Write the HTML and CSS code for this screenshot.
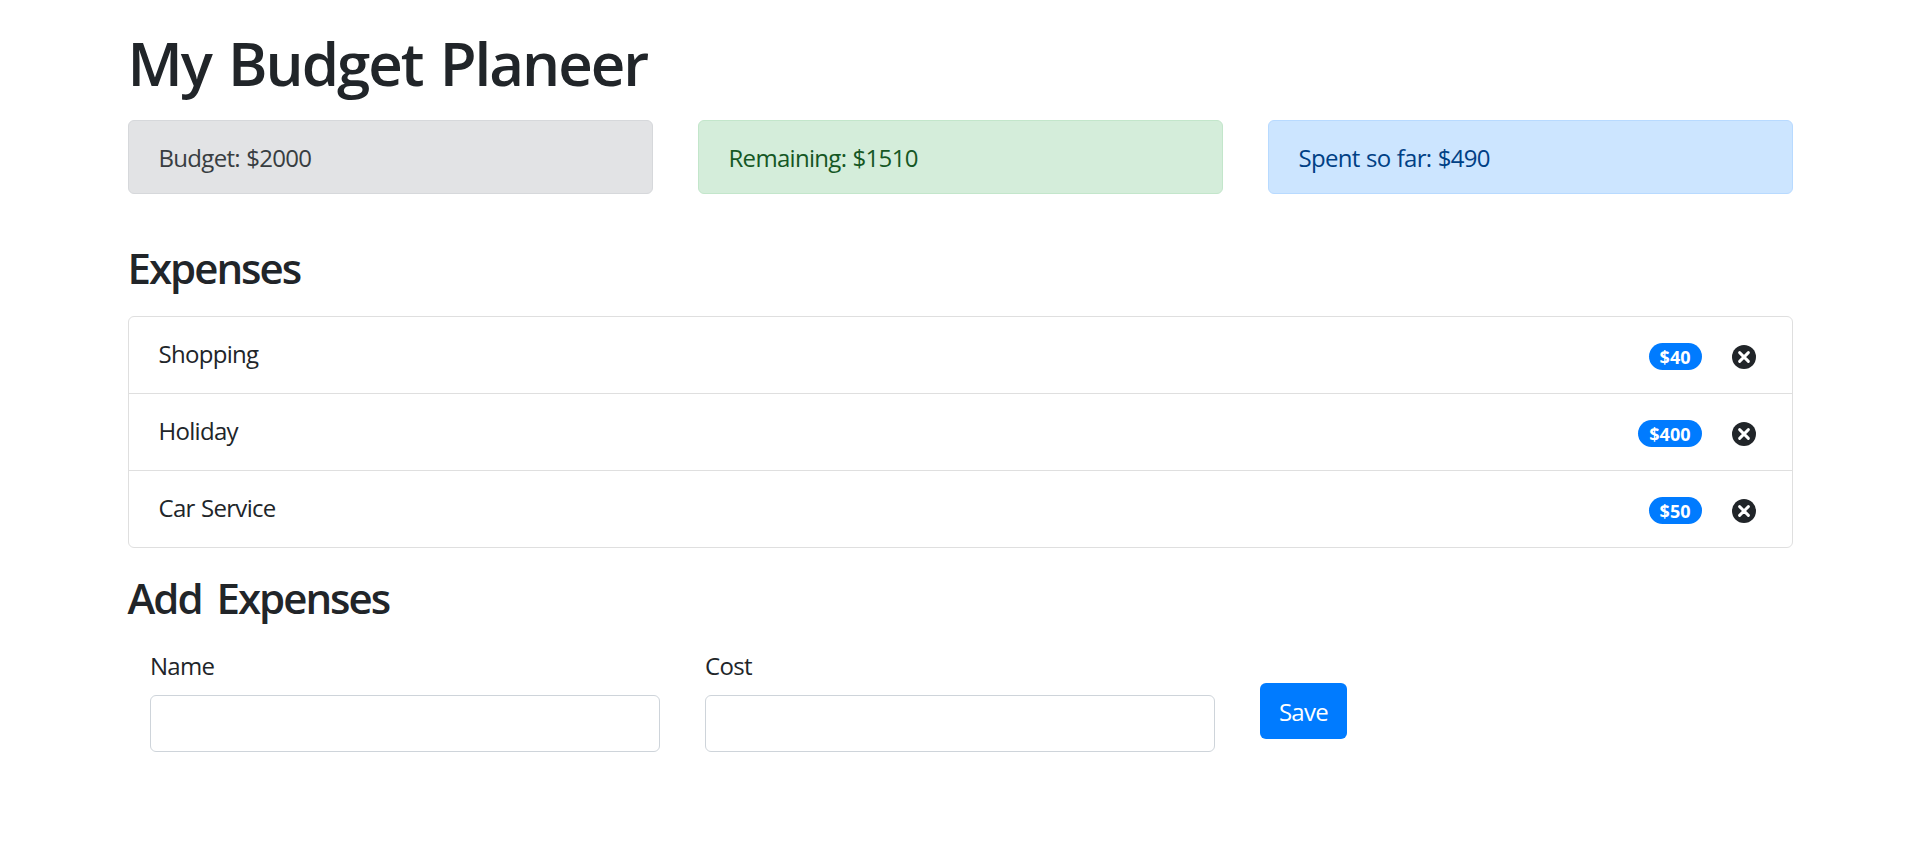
FILE: index.html
```
<!DOCTYPE html>
<html lang="en">
<head>
<meta charset="utf-8">
<title>My Budget Planeer</title>
<link rel="stylesheet" href="styles.css">
</head>
<body>
<svg class="sprite" width="0" height="0" aria-hidden="true">
  <symbol id="close" viewBox="0 0 24 24">
    <circle cx="12" cy="12" r="12" fill="#212529"/>
    <path d="M7.6 7.6l8.8 8.8M16.4 7.6l-8.8 8.8" stroke="#fff" stroke-width="2.9" stroke-linecap="round"/>
  </symbol>
</svg>
<main class="container">
  <h1 class="title">My Budget Planeer</h1>
  <div class="summary">
    <div class="alert alert-secondary">Budget: $2000</div>
    <div class="alert alert-success">Remaining: $1510</div>
    <div class="alert alert-primary">Spent so far: $490</div>
  </div>
  <h3 class="heading">Expenses</h3>
  <ul class="list">
    <li class="item"><span>Shopping</span><div class="actions"><span class="badge">$40</span><svg class="icon"><use href="#close"/></svg></div></li>
    <li class="item"><span>Holiday</span><div class="actions"><span class="badge">$400</span><svg class="icon"><use href="#close"/></svg></div></li>
    <li class="item"><span>Car Service</span><div class="actions"><span class="badge">$50</span><svg class="icon"><use href="#close"/></svg></div></li>
  </ul>
  <h3 class="heading heading-add">Add Expenses</h3>
  <form class="form">
    <div class="field"><label for="name">Name</label><input id="name" type="text"></div>
    <div class="field"><label for="cost">Cost</label><input id="cost" type="text"></div>
    <div class="submit"><button type="button" class="save">Save</button></div>
  </form>
</main>
</body>
</html>
```
FILE: styles.css
```
* { box-sizing: border-box; }
body {
  margin: 0;
  background: #fff;
  color: #212529;
  font: 400 24px/36px "Open Sans", "Noto Sans", sans-serif;
  letter-spacing: -0.7px;
  word-spacing: 0.8px;
}
.sprite { display: block; }
.container { width: 1665px; margin: 0 auto; padding-top: 27px; }
h1, h3 { margin: 0; font-weight: 600; }
.title { font-size: 60px; line-height: 72px; letter-spacing: -2px; word-spacing: 3.5px; }
.summary { display: grid; grid-template-columns: repeat(3, 1fr); gap: 45px; margin-top: 21px; }
.alert { height: 74px; padding: 19px 30px 17px; border: 1px solid; border-radius: 6px; }
.alert-secondary { color: #383d41; background: #e2e3e5; border-color: #d6d8db; }
.alert-success { color: #155724; background: #d4edda; border-color: #c3e6cb; }
.alert-primary { color: #004085; background: #cce5ff; border-color: #b8daff; }
.heading { margin-top: 49px; font-size: 42px; line-height: 50px; letter-spacing: -2px; word-spacing: 6px; }
.list { margin: 23px 0 0; padding: 0; list-style: none; border: 1px solid #dfdfdf; border-radius: 6px; }
.item { display: flex; justify-content: space-between; height: 77px; padding: 19px 36px 0 30px; }
.item + .item { border-top: 1px solid #dfdfdf; }
.item:first-child { height: 76px; }
.actions { display: flex; align-items: center; gap: 30px; height: 40px; }
.badge {
  height: 27px;
  padding: 0 11px;
  border-radius: 15px;
  background: #007bff;
  color: #fff;
  font-size: 18px;
  font-weight: 700;
  line-height: 28px;
  letter-spacing: 0;
}
.icon { width: 24px; height: 24px; margin-top: 2px; }
.heading-add { margin-top: 25px; }
.form { display: grid; grid-template-columns: repeat(3, 1fr); margin-top: 25px; }
.field { padding: 0 22.5px; }
.field label { display: block; margin-bottom: 11px; }
.field input {
  display: block;
  width: 100%;
  height: 57px;
  padding: 9px 18px;
  border: 1px solid #ced4da;
  border-radius: 6px;
  font: inherit;
}
.submit { padding: 35px 22.5px 0; }
.save {
  display: block;
  width: 87px;
  height: 56px;
  padding: 2px 0 0;
  border: 0;
  border-radius: 6px;
  background: #007bff;
  color: #fff;
  font: inherit;
  letter-spacing: -0.7px;
}
```
